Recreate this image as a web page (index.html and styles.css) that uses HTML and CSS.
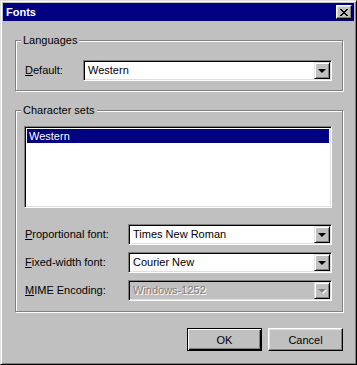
FILE: index.html
```html
<!DOCTYPE html>
<html lang="en">

<head>
    <meta charset="UTF-8">
    <title>Fonts</title>
    <link rel="stylesheet" href="styles.css">
</head>

<body>
    <div class="window">
        <!-- Title bar -->
        <div class="titlebar">
            <span class="title">Fonts</span>
            <button class="close">
                <svg width="8" height="7" viewBox="0 0 8 7">
                    <path d="M0 0h2v1h1v1h2v-1h1v-1h2v1h-1v1h-1v1h-1v1h1v1h1v1h1v1h-2v-1h-1v-1h-2v1h-1v1h-2v-1h1v-1h1v-1h1v-1h-1v-1h-1v-1h-1z" fill="#000"/>
                </svg>
            </button>
        </div>

        <div class="content">
            <!-- Languages -->
            <div class="group">
                <span class="group-title">Languages</span>
                <div class="field-row">
                    <label class="field-label short"><u>D</u>efault:</label>
                    <div class="combo">
                        <span class="combo-text">Western</span>
                        <span class="combo-button"><span class="arrow"></span></span>
                    </div>
                </div>
            </div>

            <!-- Character sets -->
            <div class="group charsets">
                <span class="group-title">Character sets</span>
                <div class="listbox">
                    <div class="list-item selected">Western</div>
                </div>
                <div class="field-row first">
                    <label class="field-label"><u>P</u>roportional font:</label>
                    <div class="combo">
                        <span class="combo-text">Times New Roman</span>
                        <span class="combo-button"><span class="arrow"></span></span>
                    </div>
                </div>
                <div class="field-row">
                    <label class="field-label"><u>F</u>ixed-width font:</label>
                    <div class="combo">
                        <span class="combo-text">Courier New</span>
                        <span class="combo-button"><span class="arrow"></span></span>
                    </div>
                </div>
                <div class="field-row">
                    <label class="field-label"><u>M</u>IME Encoding:</label>
                    <div class="combo disabled">
                        <span class="combo-text">Windows-1252</span>
                        <span class="combo-button"><span class="arrow"></span></span>
                    </div>
                </div>
            </div>

            <div class="buttons">
                <button class="btn default">OK</button>
                <button class="btn">Cancel</button>
            </div>
        </div>
    </div>
</body>

</html>
```

FILE: styles.css
```css
body {
    margin: 0;
    background-color: #c0c0c0;
    font-family: "Liberation Sans", Arial, sans-serif;
    font-size: 11px;
    line-height: 13px;
    color: #000;
}

u {
    text-decoration-thickness: 1px;
    text-underline-offset: 1px;
}

.window {
    width: 357px;
    height: 365px;
    box-sizing: border-box;
    padding: 1px;
    border: 1px solid;
    border-color: #dfdfdf #000 #000 #dfdfdf;
    box-shadow: inset 1px 1px 0 #fff, inset -1px -1px 0 #808080;
    display: flex;
    flex-direction: column;
    background-color: #c0c0c0;
}

.window {
    /* inner bevel needs its own space */
    padding: 2px;
}

.titlebar {
    height: 18px;
    background-color: #000080;
    display: flex;
    align-items: center;
    justify-content: space-between;
    padding: 0 2px 0 3px;
}

.title {
    color: #fff;
    font-weight: bold;
}

.close {
    width: 16px;
    height: 14px;
    padding: 0;
    margin: 0;
    box-sizing: border-box;
    background-color: #c0c0c0;
    border: 1px solid;
    border-color: #fff #000 #000 #fff;
    box-shadow: inset -1px -1px 0 #808080, inset 1px 1px 0 #dfdfdf;
    display: flex;
    align-items: center;
    justify-content: center;
}

.close svg {
    display: block;
    margin-left: -1px;
}

.content {
    padding: 19px 11px 0 12px;
    display: flex;
    flex-direction: column;
}

.group {
    border: 1px solid #808080;
    box-shadow: inset 1px 1px 0 #fff, 1px 1px 0 #fff;
    padding: 0 10px 9px 8px;
    display: flex;
    flex-direction: column;
}

.charsets {
    margin-top: 19px;
    padding-bottom: 10px;
}

.group-title {
    align-self: flex-start;
    margin: -7px 0 0 -3px;
    padding: 0 2px;
    background-color: #c0c0c0;
}

.field-row {
    display: flex;
    align-items: center;
    margin-top: 7px;
}

.group > .field-row:nth-child(2) {
    margin-top: 13px;
}

.field-row.first {
    margin-top: 16px;
}

.field-label {
    width: 103px;
    padding-left: 1px;
    flex-shrink: 0;
}

.field-label.short {
    width: 58px;
}

.combo {
    flex: 1;
    height: 21px;
    box-sizing: border-box;
    background-color: #fff;
    border: 1px solid;
    border-color: #808080 #fff #fff #808080;
    box-shadow: inset 1px 1px 0 #000, inset -1px -1px 0 #dfdfdf;
    display: flex;
    align-items: center;
    padding: 1px 1px 1px 1px;
}

.combo-text {
    flex: 1;
    padding-left: 3px;
}

.combo-button {
    width: 16px;
    height: 17px;
    box-sizing: border-box;
    background-color: #c0c0c0;
    border: 1px solid;
    border-color: #dfdfdf #000 #000 #dfdfdf;
    box-shadow: inset 1px 1px 0 #fff, inset -1px -1px 0 #808080;
    display: flex;
    align-items: center;
    justify-content: center;
}

.arrow {
    width: 0;
    height: 0;
    border-left: 4px solid transparent;
    border-right: 4px solid transparent;
    border-top: 4px solid #000;
    margin-left: -1px;
    margin-top: 1px;
}

.combo.disabled {
    background-color: #c0c0c0;
}

.combo.disabled .combo-text {
    color: #808080;
    text-shadow: 1px 1px 0 #fff;
}

.combo.disabled .arrow {
    border-top-color: #808080;
    filter: drop-shadow(1px 1px 0 #fff);
}

.listbox {
    margin-top: 9px;
    height: 82px;
    box-sizing: border-box;
    background-color: #fff;
    border: 1px solid;
    border-color: #808080 #fff #fff #808080;
    box-shadow: inset 1px 1px 0 #000, inset -1px -1px 0 #dfdfdf;
    padding: 2px 2px;
}

.list-item {
    height: 14px;
    line-height: 14px;
    padding-left: 2px;
}

.list-item.selected {
    background-color: #000080;
    color: #fff;
}

.buttons {
    display: flex;
    justify-content: flex-end;
    gap: 6px;
    margin-top: 16px;
}

.btn {
    width: 75px;
    height: 23px;
    box-sizing: border-box;
    padding: 0;
    font-family: inherit;
    font-size: 11px;
    color: #000;
    background-color: #c0c0c0;
    border: 1px solid;
    border-color: #fff #000 #000 #fff;
    box-shadow: inset -1px -1px 0 #808080, inset 1px 1px 0 #dfdfdf;
}

.btn.default {
    border: 1px solid #000;
    box-shadow: inset 1px 1px 0 #fff, inset -1px -1px 0 #000, inset -2px -2px 0 #808080;
}
```
